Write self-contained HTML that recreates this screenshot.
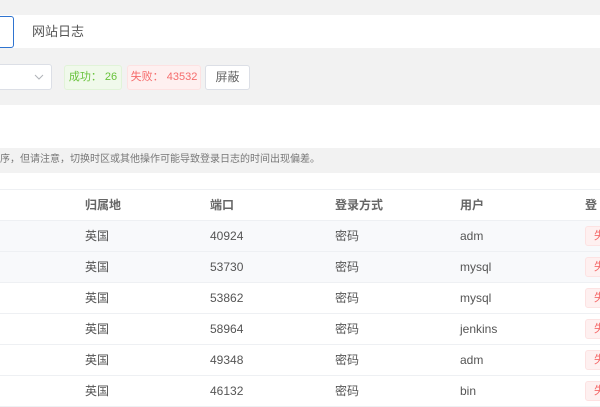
<!DOCTYPE html><html><head><meta charset="utf-8"><style>
body{margin:0;width:600px;height:400px;overflow:hidden;background:#f2f2f2;font-family:"Liberation Sans","Noto Sans CJK SC",sans-serif;color:#555;position:relative}
div{position:absolute;box-sizing:border-box}
.t{font-size:12px;white-space:nowrap;line-height:16px}
.row{left:0;width:600px;height:31px;border-bottom:1px solid #eef0f3;background:#fff}
.row span{position:absolute;top:0;line-height:31px;height:31px;font-size:12px;color:#555}
.tag{width:30px;height:20px;left:585px;top:5px;background:#fef0f0;border:1px solid #fde2e2;border-radius:3px;color:#f56c6c;font-size:11px;line-height:18px;padding-left:8px;white-space:nowrap}
.btn{top:65px;height:25px;border-radius:3px;font-size:11px;line-height:23px;text-align:center;white-space:nowrap}
</style></head><body>
<div style="left:0;top:15px;width:600px;height:33px;background:#fff"></div>
<div style="left:-10px;top:16px;width:24px;height:32px;border:1px solid #2f74d0;border-radius:3px;background:#fff"></div>
<div class="t" style="left:32px;top:24px;font-size:13px;color:#555">网站日志</div>
<div style="left:-10px;top:64px;width:62px;height:26px;background:#fff;border:1px solid #dcdfe6;border-radius:3px"></div>
<svg style="position:absolute;left:34px;top:74px" width="10" height="7"><path d="M1 1L5 5L9 1" stroke="#b0b3b8" fill="none" stroke-width="1"/></svg>
<div class="btn" style="left:64px;width:58px;background:#f0f9eb;border:1px solid #e1f3d8;color:#67c23a">成功： 26</div>
<div class="btn" style="left:127px;width:74px;background:#fef0f0;border:1px solid #fde2e2;color:#f56c6c">失败： 43532</div>
<div class="btn" style="left:205px;width:45px;background:#fff;border:1px solid #dcdfe6;color:#666;font-size:12px">屏蔽</div>
<div style="left:0;top:105px;width:600px;height:43px;background:#fff"></div>
<div class="t" style="left:0;top:152px;font-size:10px;color:#777">序，但请注意，切换时区或其他操作可能导致登录日志的时间出现偏差。</div>
<div style="left:0;top:173px;width:600px;height:227px;background:#fff"></div>
<div style="left:0;top:189px;width:600px;height:32px;border-top:1px solid #eef0f3;border-bottom:1px solid #eef0f3;background:#fff;font-size:12px;font-weight:bold;color:#666;line-height:30px">
<span style="position:absolute;left:85px">归属地</span>
<span style="position:absolute;left:210px">端口</span>
<span style="position:absolute;left:335px">登录方式</span>
<span style="position:absolute;left:460px">用户</span>
<span style="position:absolute;left:585px">登录</span></div>
<div class="row" style="top:221px;background:#f8f9fb"><span style="left:85px">英国</span><span style="left:210px">40924</span><span style="left:335px">密码</span><span style="left:460px">adm</span><div class="tag">失败</div></div>
<div class="row" style="top:252px;background:#f8f9fb"><span style="left:85px">英国</span><span style="left:210px">53730</span><span style="left:335px">密码</span><span style="left:460px">mysql</span><div class="tag">失败</div></div>
<div class="row" style="top:283px"><span style="left:85px">英国</span><span style="left:210px">53862</span><span style="left:335px">密码</span><span style="left:460px">mysql</span><div class="tag">失败</div></div>
<div class="row" style="top:314px"><span style="left:85px">英国</span><span style="left:210px">58964</span><span style="left:335px">密码</span><span style="left:460px">jenkins</span><div class="tag">失败</div></div>
<div class="row" style="top:345px"><span style="left:85px">英国</span><span style="left:210px">49348</span><span style="left:335px">密码</span><span style="left:460px">adm</span><div class="tag">失败</div></div>
<div class="row" style="top:376px"><span style="left:85px">英国</span><span style="left:210px">46132</span><span style="left:335px">密码</span><span style="left:460px">bin</span><div class="tag">失败</div></div>
</body></html>
